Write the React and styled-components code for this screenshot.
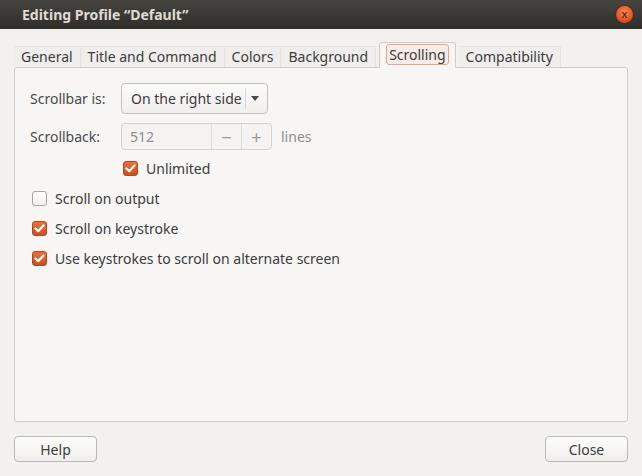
import React from "react";
import styled, { createGlobalStyle } from "styled-components";

const Global = createGlobalStyle`
  html, body { margin: 0; padding: 0; }
  body {
    background: #f2f1f0;
    font-family: "Noto Sans", "Open Sans", sans-serif;
    font-size: 14px;
    color: #3c3c3c;
  }
`;

const Window = styled.div`
  width: 642px;
  height: 476px;
  display: flex;
  flex-direction: column;
  background: #f2f1f0;
  overflow: hidden;
`;

const TitleBar = styled.div`
  height: 29px;
  flex: none;
  display: flex;
  align-items: center;
  justify-content: space-between;
  padding: 0 9px 0 22px;
  background: linear-gradient(#45443f, #2f2e2b);
`;

const Title = styled.div`
  color: #dfdbd2;
  font-weight: bold;
  font-size: 14px;
`;

const CloseDot = styled.div`
  width: 17px;
  height: 17px;
  border-radius: 50%;
  background: radial-gradient(circle at 50% 35%, #f5875a, #df4d1a 70%);
  box-shadow: 0 0 0 1px #5a2a18;
  color: #3a1a0c;
  font-size: 11px;
  line-height: 16px;
  text-align: center;
`;

const Body = styled.div`
  flex: 1;
  display: flex;
  flex-direction: column;
  padding: 12px 14px 14px;
`;

const TabBar = styled.div`
  display: flex;
  align-items: flex-end;
  height: 26px;
  position: relative;
  z-index: 1;
`;

const Tab = styled.div`
  height: ${p => (p.$active ? "26px" : "21px")};
  box-sizing: border-box;
  padding: 0 ${p => (p.$active ? "6px" : "4px")} ${p => (p.$active ? "2px" : "0")};
  display: flex;
  align-items: ${p => (p.$active ? "center" : "flex-start")};
  color: #3c3c3c;
  background: ${p => (p.$active ? "#f7f6f5" : "#efeeec")};
  border: 1px solid ${p => (p.$active ? "#cfcbc5" : "#e4e2de")};
  border-left: ${p => (p.$active ? "1px solid #cfcbc5" : "none")};
  border-bottom: ${p => (p.$active ? "1px solid #f7f6f5" : "none")};
  border-radius: ${p => (p.$active ? "4px 4px 0 0" : "2px 2px 0 0")};
  margin: 0 ${p => (p.$active ? "3px" : "0")} ${p => (p.$active ? "-1px" : "0")};
  line-height: 17px;
`;

const TabLabel = styled.span`
  padding: 0 ${p => (p.$active ? "2px" : "3px")};
  border-radius: 3px;
  line-height: 19px;
  ${p => p.$active && "border: 1px solid #e9a58a; background: #f8ece6;"}
`;

const Panel = styled.div`
  flex: 1;
  background: #f7f6f5;
  border: 1px solid #cfcbc5;
  border-radius: 3px;
  padding: 15px 15px;
  display: flex;
  flex-direction: column;
`;

const Form = styled.div`
  display: grid;
  grid-template-columns: 91px auto;
  align-items: center;
  row-gap: 9px;
  justify-items: start;
`;

const Label = styled.div`
  color: #4a4a4a;
`;

const Combo = styled.div`
  height: 31px;
  box-sizing: border-box;
  display: flex;
  align-items: center;
  border: 1px solid #c4c0ba;
  border-radius: 4px;
  background: linear-gradient(#fbfbfa, #f0efed);
  padding-left: 9px;
`;

const ComboSep = styled.div`
  width: 1px;
  height: 21px;
  background: #dcd9d5;
  margin-left: 3px;
`;

const Arrow = styled.div`
  width: 0;
  height: 0;
  margin: 0 8px 0 5px;
  border-left: 4.5px solid transparent;
  border-right: 4.5px solid transparent;
  border-top: 5px solid #4a4a4a;
`;

const SpinRow = styled.div`
  display: flex;
  align-items: center;
  gap: 9px;
`;

const Spin = styled.div`
  width: 151px;
  height: 27px;
  box-sizing: border-box;
  display: flex;
  border: 1px solid #d6d3ce;
  border-radius: 4px;
  background: #f4f3f2;
`;

const SpinValue = styled.div`
  flex: 1;
  padding-left: 8px;
  display: flex;
  align-items: center;
  color: #8e8e8e;
`;

const SpinBtn = styled.div`
  width: 29px;
  border-left: 1px solid #e0ddd9;
  display: flex;
  align-items: center;
  justify-content: center;
  color: #9a9a9a;
  font-size: 18px;
`;

const Muted = styled.span`
  color: #8e8e8e;
`;

const CheckRow = styled.label`
  display: flex;
  align-items: center;
  gap: 8px;
  margin-left: ${p => p.$indent || 0}px;
  height: 30px;
`;

const Unlimited = styled(CheckRow)`
  margin-top: 4px;
  height: 28px;
`;

const Box = styled.span`
  width: 15px;
  height: 15px;
  box-sizing: border-box;
  border-radius: 3px;
  display: flex;
  align-items: center;
  justify-content: center;
  border: 1px solid ${p => (p.$on ? "#b2461c" : "#a8a49e")};
  background: ${p => (p.$on ? "linear-gradient(#e8703f, #cf4d1a)" : "linear-gradient(#ffffff, #f0efed)")};
`;

const Checks = styled.div`
  margin-top: 1px;
  display: flex;
  flex-direction: column;
  margin-left: 2px;
`;

const Footer = styled.div`
  display: flex;
  justify-content: space-between;
  padding-top: 14px;
`;

const Button = styled.button`
  width: 83px;
  height: 26px;
  font: inherit;
  color: #3c3c3c;
  border: 1px solid #bcb8b2;
  border-radius: 4px;
  background: linear-gradient(#fdfdfc, #efeeec);
  padding: 0;
`;

const Check = ({ on }) => (
  <Box $on={on}>
    {on && (
      <svg width="11" height="9" viewBox="0 0 11 9">
        <path d="M1.5 4.5 L4.2 7.2 L9.5 1.5" fill="none" stroke="#fff" strokeWidth="2.2" strokeLinecap="round" strokeLinejoin="round" />
      </svg>
    )}
  </Box>
);

const tabs = ["General", "Title and Command", "Colors", "Background", "Scrolling", "Compatibility"];

export default function App() {
  return (
    <Window>
      <Global />
      <TitleBar>
        <Title>Editing Profile “Default”</Title>
        <CloseDot>x</CloseDot>
      </TitleBar>
      <Body>
        <TabBar>
          {tabs.map(t => (
            <Tab key={t} $active={t === "Scrolling"}>
              <TabLabel $active={t === "Scrolling"}>{t}</TabLabel>
            </Tab>
          ))}
        </TabBar>
        <Panel>
          <Form>
            <Label>Scrollbar is:</Label>
            <Combo>
              On the right side
              <ComboSep />
              <Arrow />
            </Combo>
            <Label>Scrollback:</Label>
            <SpinRow>
              <Spin>
                <SpinValue>512</SpinValue>
                <SpinBtn>−</SpinBtn>
                <SpinBtn>+</SpinBtn>
              </Spin>
              <Muted>lines</Muted>
            </SpinRow>
          </Form>
          <Unlimited $indent={93}>
            <Check on />
            Unlimited
          </Unlimited>
          <Checks>
            <CheckRow>
              <Check />
              Scroll on output
            </CheckRow>
            <CheckRow>
              <Check on />
              Scroll on keystroke
            </CheckRow>
            <CheckRow>
              <Check on />
              Use keystrokes to scroll on alternate screen
            </CheckRow>
          </Checks>
        </Panel>
        <Footer>
          <Button>Help</Button>
          <Button>Close</Button>
        </Footer>
      </Body>
    </Window>
  );
}
